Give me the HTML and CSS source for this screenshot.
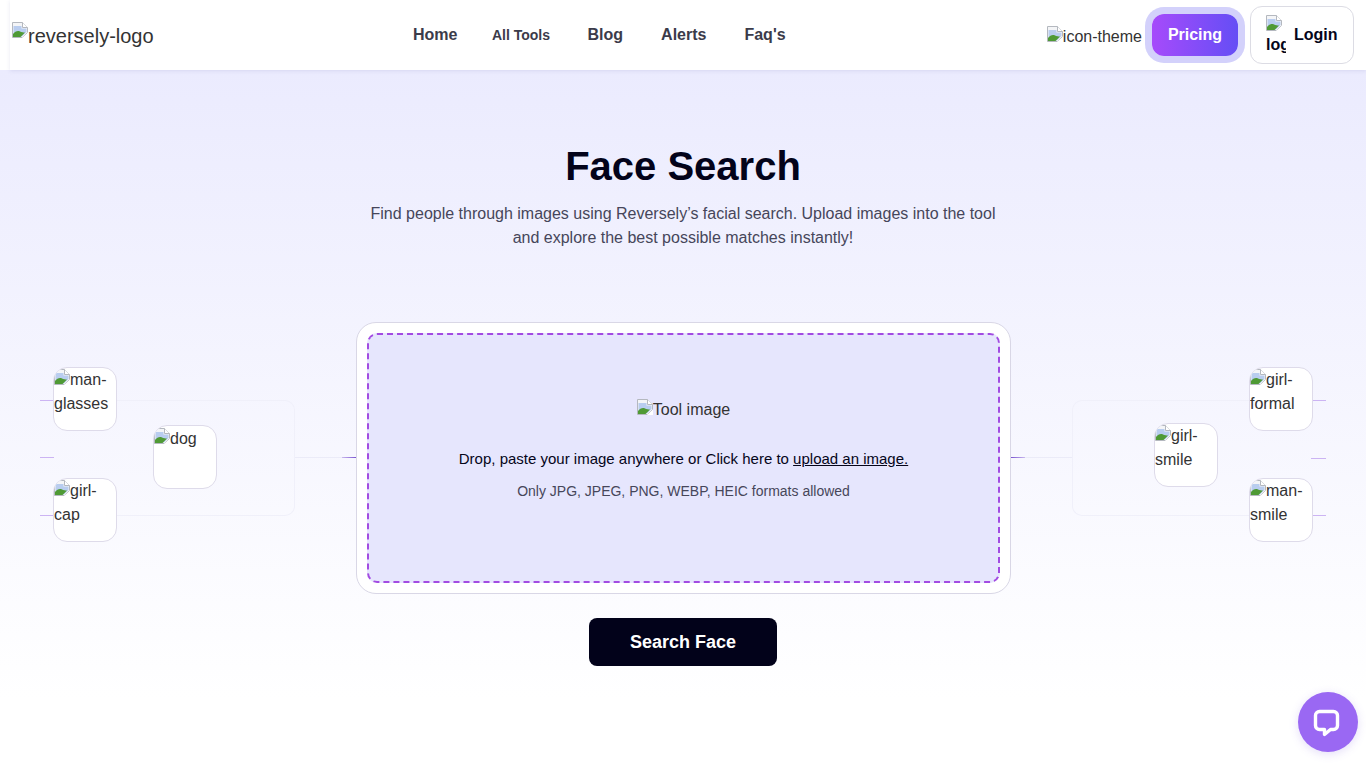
FILE: index.html
```html
<!DOCTYPE html>
<html lang="en">
<head>
<meta charset="utf-8">
<title>Face Search</title>
<link rel="stylesheet" href="styles.css">
</head>
<body>
<svg class="defs" width="0" height="0" aria-hidden="true">
  <symbol id="broken" viewBox="0 0 16 16">
    <path d="M0.5 0.5H10.5L15.5 5.5V10.500L10.500 15.500H0.500Z" fill="#f4f5f7" stroke="#b4b8bf"/>
    <path d="M10.500 0.500V5.500H15.500" fill="#fff" stroke="#b4b8bf"/>
    <path d="M1.500 4H9.500V6.500H14.500V10L10 14.500H1.500Z" fill="#b9cdef"/>
    <path d="M1 15V12C3 9.500 5.500 8.500 8 9.500C9.500 10.200 11.500 10.500 13 10.500L8.500 15Z" fill="#4f9a35"/>
    <path d="M10 16L16 10.500V16Z" fill="#fff"/>
  </symbol>
</svg>
<header class="topbar">
  <a class="logo"><svg class="bi"><use href="#broken"/></svg>reversely-logo</a>
  <nav class="nav">
    <a class="nav-link">Home</a>
    <a class="nav-link nav-small">All Tools</a>
    <a class="nav-link">Blog</a>
    <a class="nav-link">Alerts</a>
    <a class="nav-link">Faq's</a>
  </nav>
  <div class="actions">
    <span class="theme"><svg class="bi"><use href="#broken"/></svg>icon-theme</span>
    <a class="pricing">Pricing</a>
    <a class="login"><span class="login-img"><svg class="bi"><use href="#broken"/></svg>log</span><span>Login</span></a>
  </div>
</header>
<main class="page">
  <section class="hero">
    <h1 class="title">Face Search</h1>
    <p class="subtitle">Find people through images using Reversely’s facial search. Upload images into the tool and explore the best possible matches instantly!</p>
  </section>
  <section class="tool">
    <div class="panel">
      <span class="bracket bracket-left"></span>
      <span class="stem stem-left"></span>
      <span class="tick tick-a"></span><span class="tick tick-b"></span><span class="tick tick-c"></span>
      <span class="tick tick-in-left"></span>
      <div class="node node-a"><svg class="bi"><use href="#broken"/></svg>man-glasses</div>
      <div class="node node-dog"><svg class="bi"><use href="#broken"/></svg>dog</div>
      <div class="node node-c"><svg class="bi"><use href="#broken"/></svg>girl-cap</div>
    </div>
    <div class="card">
      <div class="drop">
        <div class="tool-img"><svg class="bi"><use href="#broken"/></svg>Tool image</div>
        <p class="drop-main">Drop, paste your image anywhere or Click here to <u>upload an image.</u></p>
        <p class="drop-note">Only JPG, JPEG, PNG, WEBP, HEIC formats allowed</p>
      </div>
    </div>
    <div class="panel">
      <span class="bracket bracket-right"></span>
      <span class="stem stem-right"></span>
      <span class="tick tick-r-a"></span><span class="tick tick-r-b"></span><span class="tick tick-r-c"></span>
      <span class="tick tick-in-right"></span>
      <div class="node node-r-a"><svg class="bi"><use href="#broken"/></svg>girl-formal</div>
      <div class="node node-r-b"><svg class="bi"><use href="#broken"/></svg>girl-smile</div>
      <div class="node node-r-c"><svg class="bi"><use href="#broken"/></svg>man-smile</div>
    </div>
  </section>
  <div class="cta"><button class="search-btn">Search Face</button></div>
</main>
<a class="chat" aria-label="Chat">
  <svg width="30" height="30" viewBox="0 0 30 30"><path d="M6.500 4.500H20.500A4 4 0 0 1 24.500 8.500V18.500A4 4 0 0 1 20.500 22.500H17.500L11.500 27.500V22.500H6.500A4 4 0 0 1 2.500 18.500V8.500A4 4 0 0 1 6.500 4.500Z" fill="none" stroke="#fff" stroke-width="3.400" stroke-linejoin="round"/></svg>
</a>
</body>
</html>
```
FILE: styles.css
```css
* { box-sizing: border-box; }
html, body { margin: 0; padding: 0; }
body {
  font-family: "Liberation Sans", Arial, sans-serif;
  font-size: 16px;
  line-height: 24px;
  color: #333;
  background: #fff;
  height: 768px;
  overflow: hidden;
}
.defs { position: absolute; }
.bi { width: 16px; height: 16px; display: inline-block; vertical-align: baseline; }

.topbar {
  height: 70px;
  margin-left: 10px;
  padding: 0 12px 0 2px;
  display: flex;
  align-items: center;
  background: #fff;
  box-shadow: 0 1px 4px rgba(90, 90, 160, .14);
  position: relative;
  z-index: 2;
}
.logo { width: 401px; font-size: 20px; line-height: 30px; color: #333; padding-top: 2px; }
.logo .bi { vertical-align: top; margin-top: 1px; }
.nav { display: flex; align-items: center; gap: 38px; }
.nav-link { font-weight: 700; font-size: 16px; color: #3b3b4a; }
.nav-small { font-size: 14px; margin-left: -3.500px; margin-right: -0.500px; }
.actions { margin-left: auto; display: flex; align-items: center; }
.theme { white-space: nowrap; margin-right: 10px; padding-top: 4px; }
.pricing {
  width: 86px; height: 42px;
  display: flex; align-items: center; justify-content: center;
  border-radius: 12px;
  background: linear-gradient(90deg, #a64bfb, #654ef5);
  box-shadow: 0 0 0 7px #d3d1fb;
  color: #fff; font-weight: 700; font-size: 16px;
  margin-right: 12px;
}
.login {
  width: 104px; height: 58px;
  display: flex; align-items: center;
  padding-left: 15px;
  background: #fff;
  border: 1px solid #dcdce4;
  border-radius: 12px;
  color: #05051a; font-weight: 700; font-size: 16px;
}
.login-img { width: 20px; height: 40px; overflow: hidden; margin-right: 8px; line-height: 24px; }
.login-img .bi { display: block; margin-bottom: 2px; }

.page {
  height: 698px;
  position: relative;
  background: linear-gradient(180deg, #ebebfe 0%, #ffffff 90%);
}
.hero { padding-top: 71px; text-align: center; }
.title { margin: 0; font-size: 40px; line-height: 50px; font-weight: 700; color: #03031a; }
.subtitle { margin: 11px auto 0; width: 640px; color: #46465a; }

.tool {
  margin-top: 72px;
  display: grid;
  grid-template-columns: 356px 655px 355px;
  height: 272px;
}
.panel { position: relative; }
.card {
  background: #fff;
  border: 1px solid #d9d7e6;
  border-radius: 20px;
  padding: 10px;
}
.drop {
  height: 100%;
  background: #e6e6fd;
  border: 2px dashed #a24be2;
  border-radius: 10px;
  text-align: center;
  padding-top: 63px;
  color: #05051a;
}
.tool-img { color: #333; }
.drop-main { margin: 25px 0 0; font-size: 15px; }
.drop-note { margin: 8px 0 0; font-size: 14px; color: #46465a; }

.node {
  position: absolute;
  width: 64px; height: 64px;
  background: #fff;
  border: 1px solid #dedbea;
  border-radius: 14px;
  overflow: hidden;
}
.node-a { left: 53px; top: 45px; }
.node-dog { left: 153px; top: 103px; padding-top: 1px; }
.node-c { left: 53px; top: 156px; }
.node-r-a { left: 238px; top: 45px; }
.node-r-b { left: 143px; top: 101px; }
.node-r-c { left: 238px; top: 156px; }

.bracket { position: absolute; top: 78px; height: 116px; border: 1px solid #f0f0fa; }
.bracket-left { left: 117px; width: 178px; border-left: 0; border-radius: 0 10px 10px 0; }
.bracket-right { left: 61px; width: 178px; border-right: 0; border-radius: 10px 0 0 10px; }
.stem { position: absolute; top: 135px; height: 1px; background: #ebebf8; }
.stem-left { left: 295px; width: 47px; }
.stem-right { left: 13px; width: 48px; }
.tick { position: absolute; height: 1px; width: 14px; background: #ccb4f3; }
.tick-a { left: 40px; top: 78px; }
.tick-b { left: 40px; top: 135px; }
.tick-c { left: 40px; top: 193px; }
.tick-in-left { left: 342px; top: 135px; background: linear-gradient(90deg, #c9b8ee, #7a55d0); }
.tick-in-right { left: 0; top: 135px; background: linear-gradient(90deg, #7a55d0, #c9b8ee); }
.tick-r-a { left: 301px; top: 78px; }
.tick-r-b { left: 300px; top: 136px; width: 15px; }
.tick-r-c { left: 301px; top: 193px; }

.cta { margin-top: 24px; text-align: center; }
.search-btn {
  width: 188px; height: 48px;
  border: 0; border-radius: 8px;
  background: #02021a;
  color: #fff;
  font: 700 18px "Liberation Sans", Arial, sans-serif;
}
.chat {
  position: fixed;
  right: 8px; bottom: 16px;
  width: 60px; height: 60px;
  border-radius: 50%;
  background: #9a68f3;
  box-shadow: 0 2px 10px rgba(120, 90, 220, .2);
  display: flex; align-items: center; justify-content: center;
  z-index: 3;
}
```
